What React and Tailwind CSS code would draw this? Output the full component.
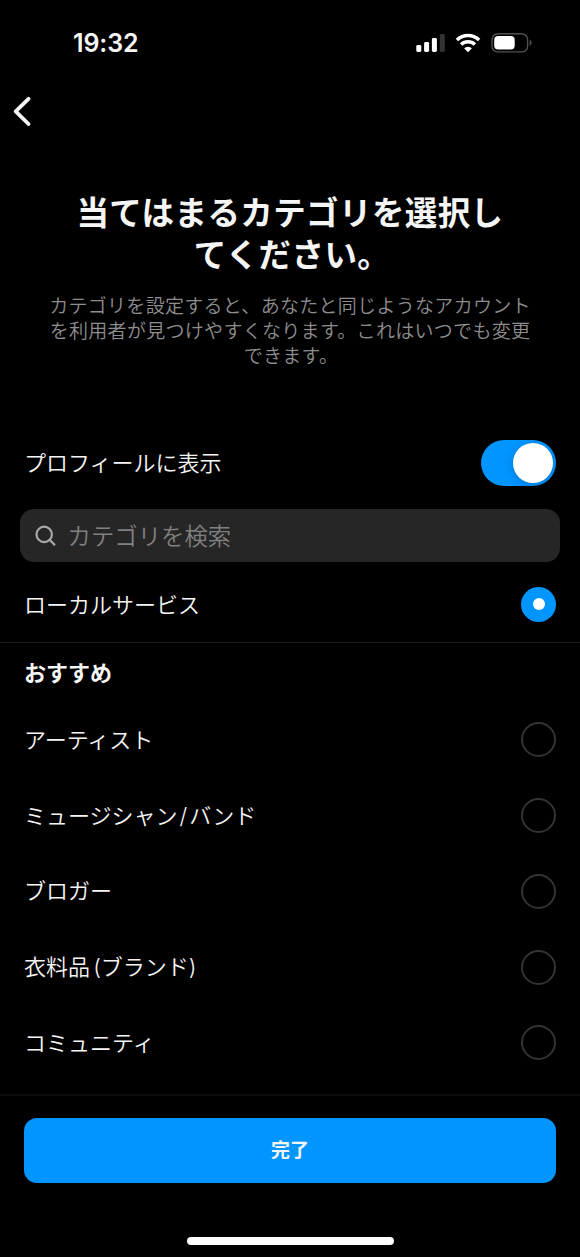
import { useState } from "react";
import clsx from "clsx";

const categories = [
  "アーティスト",
  "ミュージシャン/バンド",
  "ブロガー",
  "衣料品 (ブランド)",
  "コミュニティ",
];

function StatusBar() {
  return (
    <div className="flex h-[86px] items-center justify-between pl-[73px] pr-[48px]">
      <span className="pt-px text-[25px] leading-none font-semibold tracking-[-0.1px]">19:32</span>
      <div className="flex items-center">
        {/* Signal */}
        <svg width="30" height="20" viewBox="0 0 30 20">
          <rect x="0.3" y="12" width="5" height="7" rx="1.4" fill="#fff" />
          <rect x="8.1" y="9" width="5" height="10" rx="1.4" fill="#fff" />
          <rect x="15.9" y="5" width="5" height="14" rx="1.4" fill="#fff" />
          <rect x="23.8" y="1" width="5" height="18" rx="1.4" fill="#333" />
        </svg>
        {/* Wifi */}
        <svg className="ml-[9px]" width="26" height="20" viewBox="0 0 26 20" fill="none" stroke="#fff" strokeWidth="3.5">
          <path d="M1.9 6.9a16 16 0 0 1 22.2 0" />
          <path d="M6.1 11.5a9.9 9.9 0 0 1 13.8 0" />
          <path d="M13 19.2 9.1 15.3a5.5 5.5 0 0 1 7.8 0z" fill="#fff" stroke="none" />
        </svg>
        {/* Battery */}
        <svg className="ml-[10px]" width="41" height="20" viewBox="0 0 41 20">
          <rect x="1" y="0.7" width="35.6" height="18.2" rx="6" fill="none" stroke="#505050" strokeWidth="1.4" />
          <rect x="3.2" y="3" width="20.5" height="13.6" rx="4" fill="#fff" />
          <path d="M38.6 6.8c1.3.5 2 1.6 2 3s-.7 2.5-2 3z" fill="#505050" />
        </svg>
      </div>
    </div>
  );
}

function Radio({ checked }) {
  return (
    <span
      className={clsx(
        "flex size-[35px] items-center justify-center rounded-full",
        checked ? "bg-[#0095ff]" : "border-2 border-[#333333]"
      )}
    >
      {checked && <span className="size-3 rounded-full bg-white" />}
    </span>
  );
}

// Gives the slash in names like "A/B" a little air
function CategoryName({ name }) {
  const [first, second] = name.split("/");
  return (
    <span className="pt-px [word-spacing:-3px]">
      {first}
      {second && <span className="mx-[2px]">/</span>}
      {second}
    </span>
  );
}

export default function App() {
  const [visible, setVisible] = useState(true);
  const [selected, setSelected] = useState("ローカルサービス");

  return (
    <div className="flex h-[1257px] w-[580px] flex-col overflow-hidden bg-black font-['Inter','Noto_Sans_CJK_JP',sans-serif] text-[#f5f5f5]">
      <StatusBar />

      <header className="flex h-[50px] items-center pl-3">
        <button aria-label="戻る">
          <svg width="20" height="30" viewBox="0 0 20 30" fill="none" stroke="#f5f5f5" strokeWidth="3.8" strokeLinecap="round" strokeLinejoin="round">
            <path d="M16.5 2.8 3.7 15.3l12.8 12.7" />
          </svg>
        </button>
      </header>

      <section className="flex h-[289px] flex-col items-center pt-[57px] text-center">
        <h1 className="text-[32.5px] leading-[42px] font-bold tracking-[0.4px]">
          当てはまるカテゴリを選択し
          <br />
          <span className="pl-1">てください。</span>
        </h1>
        <p className="mt-[17px] text-[19px] leading-[25px] font-[350] tracking-[0.3px] text-[#8e8e8e]">
          カテゴリを設定すると、あなたと同じようなアカウント
          <br />
          を利用者が見つけやすくなります。これはいつでも変更
          <br />
          <span className="pl-0.5">できます。</span>
        </p>
      </section>

      <div className="flex h-[75px] items-center justify-between pr-6 pl-6 text-[22px] font-[350]">
        <span className="pt-px">プロフィールに表示</span>
        <button
          role="switch"
          aria-checked={visible}
          onClick={() => setVisible(!visible)}
          className={clsx(
            "flex h-[46px] w-[75px] items-center rounded-full px-[3px]",
            visible ? "justify-end bg-[#0095ff]" : "justify-start bg-[#333333]"
          )}
        >
          <span className="size-10 rounded-full bg-white shadow-[0_2px_8px_rgba(0,0,0,0.2)]" />
        </button>
      </div>

      <div className="mx-5 mt-[9px] flex h-[53px] items-center rounded-[14px] bg-[#262626] pl-[15px]">
        <svg width="22" height="22" viewBox="0 0 22 22" fill="none" stroke="#a8a8a8" strokeWidth="2.2" strokeLinecap="round">
          <circle cx="9.2" cy="9.4" r="7.7" />
          <path d="m14.8 15 4.6 4.6" />
        </svg>
        <span className="ml-[10.5px] pt-[3px] text-[23.4px] font-[350] text-[#808080]">カテゴリを検索</span>
      </div>

      <button
        onClick={() => setSelected("ローカルサービス")}
        className="mt-[4.5px] flex h-[76.5px] items-center justify-between border-b border-[#1c1c1c] px-6 text-[22px] font-[350]"
      >
        <span className="pt-[3px]">ローカルサービス</span>
        <Radio checked={selected === "ローカルサービス"} />
      </button>

      <h2 className="flex h-[59px] items-center px-6 pt-px text-[22px] font-bold">おすすめ</h2>

      <div className="flex h-[393.5px] flex-col border-b-2 border-[#0c0c0c]">
        {categories.map((name) => (
          <button
            key={name}
            onClick={() => setSelected(name)}
            className="flex h-[75.75px] shrink-0 items-center justify-between px-6 text-[22px] font-[350]"
          >
            <CategoryName name={name} />
            <Radio checked={selected === name} />
          </button>
        ))}
      </div>

      <footer className="flex flex-1 flex-col items-center px-6 pt-[22.5px]">
        <button className="h-[65px] w-full rounded-[13px] bg-[#0095ff] pt-0.5 text-[19px] font-bold">
          完了
        </button>
        <div className="mt-auto mb-3 h-2 w-[207px] rounded-full bg-white" />
      </footer>
    </div>
  );
}
